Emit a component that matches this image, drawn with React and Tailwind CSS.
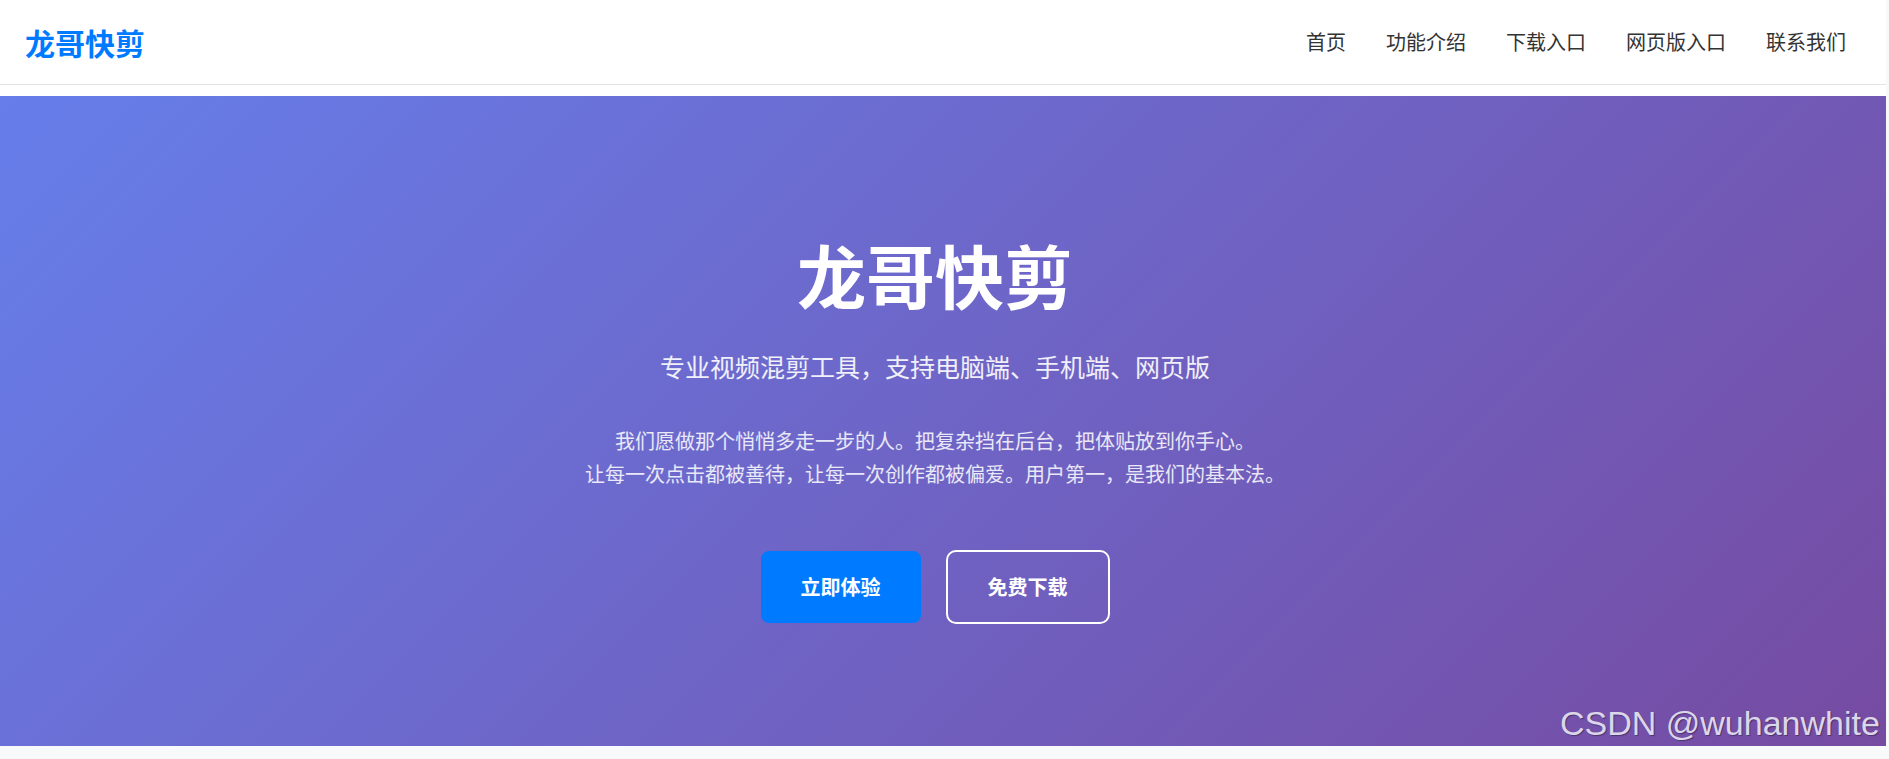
import React from 'react';

export default function App() {
  const links = ['首页', '功能介绍', '下载入口', '网页版入口', '联系我们'];

  return (
    <div className="relative min-h-screen bg-[#f8f9fa] font-['Noto_Sans_CJK_SC',sans-serif]">
      <div className="mr-[3px]">
        <header className="flex h-[85px] items-center justify-between border-b border-[#e3e3e3] bg-white pl-[25px] pr-[40px]">
          <div className="text-[30px] font-bold text-[#007bff]">龙哥快剪</div>
          <nav className="flex gap-[40px]">
            {links.map(link => (
              <a key={link} href="#" className="text-[20px] font-normal text-[#333]">
                {link}
              </a>
            ))}
          </nav>
        </header>
        <div className="h-[11px] bg-white" />

        <section className="flex h-[650px] flex-col items-center bg-[linear-gradient(135deg,#667eea_0%,#764ba2_100%)] pr-[16px] pt-[137px] text-white">
          <h1 className="text-[69px] font-bold leading-[83px]">龙哥快剪</h1>
          <p className="mt-[31px] text-[25px] leading-[38px] text-white/90">
            专业视频混剪工具，支持电脑端、手机端、网页版
          </p>
          <div className="mt-[39px] text-center text-[20px] leading-[33px] text-white/85">
            <p>我们愿做那个悄悄多走一步的人。把复杂挡在后台，把体贴放到你手心。</p>
            <p>让每一次点击都被善待，让每一次创作都被偏爱。用户第一，是我们的基本法。</p>
          </div>
          <div className="mt-[60px] flex items-center gap-[25px]">
            <button className="flex h-[72px] w-[160px] items-center justify-center rounded-lg bg-[#007bff] text-[20px] font-bold text-white">
              立即体验
            </button>
            <button className="flex h-[74px] w-[164px] items-center justify-center rounded-[10px] border-2 border-white text-[20px] font-bold text-white">
              免费下载
            </button>
          </div>
        </section>
      </div>

      <div className="absolute left-[1560px] top-[706px] font-['Liberation_Sans',Arial,sans-serif] text-[34px] leading-none text-[#dcd6ea] [text-shadow:1px_1px_1px_rgba(0,0,0,0.35)]">
        CSDN @wuhanwhite
      </div>
    </div>
  );
}
